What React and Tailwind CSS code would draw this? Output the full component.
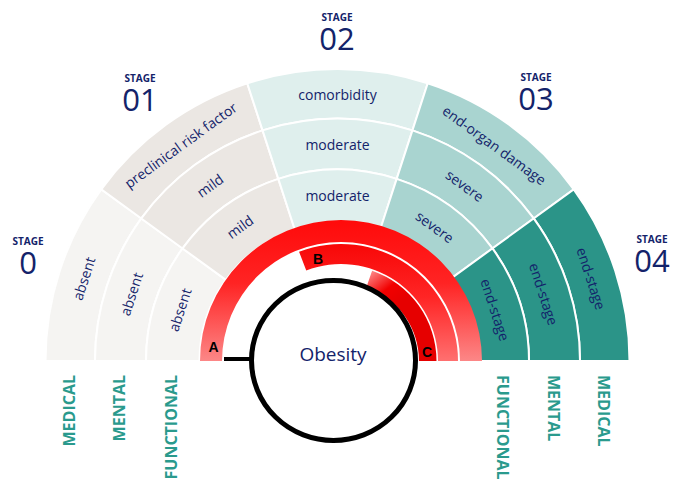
const CX = 337.5;
const CY = 361;
const RX = 341;
const NAVY = "#13236a";
const TEAL = "#2a9a8d";

const stages = [
  { fill: "#f5f4f2", labels: ["absent", "absent", "absent"] },
  { fill: "#ebe7e3", labels: ["preclinical risk factor", "mild", "mild"] },
  { fill: "#dfefed", labels: ["comorbidity", "moderate", "moderate"] },
  { fill: "#a9d4d0", labels: ["end-organ damage", "severe", "severe"] },
  { fill: "#2b9488", labels: ["end-stage", "end-stage", "end-stage"] },
];

const rings = [
  { r0: 242.5, r1: 292, rt: 267 },
  { r0: 191.5, r1: 242.5, rt: 217 },
  { r0: 138, r1: 191.5, rt: 166 },
];

const stageTags = [
  { x: 28, y: 245, n: "0" },
  { x: 140, y: 82, n: "01" },
  { x: 337, y: 21, n: "02" },
  { x: 536, y: 81, n: "03" },
  { x: 652, y: 243, n: "04" },
];

function pt(cx, cy, r, a) {
  const rad = (a * Math.PI) / 180;
  return [cx + r * Math.cos(rad), cy - r * Math.sin(rad)];
}

function sector(cx, cy, r0, r1, a0, a1) {
  const [x1, y1] = pt(cx, cy, r1, a0);
  const [x2, y2] = pt(cx, cy, r1, a1);
  const [x3, y3] = pt(cx, cy, r0, a1);
  const [x4, y4] = pt(cx, cy, r0, a0);
  return `M${x1} ${y1} A${r1} ${r1} 0 0 0 ${x2} ${y2} L${x3} ${y3} A${r0} ${r0} 0 0 1 ${x4} ${y4} Z`;
}

function Wheel() {
  return (
    <svg width="685" height="491" viewBox="0 0 685 491" className="block">
      <defs>
        <linearGradient id="gOuter" gradientUnits="userSpaceOnUse" x1="0" y1="220" x2="0" y2="361">
          <stop offset="0" stopColor="#ff0a0a" />
          <stop offset="0.45" stopColor="#ff2424" />
          <stop offset="1" stopColor="#fc8787" />
        </linearGradient>
        <linearGradient id="gMid" gradientUnits="userSpaceOnUse" x1="0" y1="245" x2="0" y2="361">
          <stop offset="0" stopColor="#f80808" />
          <stop offset="0.45" stopColor="#ff2525" />
          <stop offset="1" stopColor="#ff7070" />
        </linearGradient>
        <linearGradient id="gIn" gradientUnits="userSpaceOnUse" x1="372" y1="266" x2="400" y2="302">
          <stop offset="0" stopColor="#ff9c9c" />
          <stop offset="0.6" stopColor="#f20000" />
          <stop offset="1" stopColor="#e60000" />
        </linearGradient>
      </defs>

      {stages.map((s, i) => {
        const a1 = 180 - 36 * i;
        const a0 = a1 - 36;
        const mid = a1 - 18;
        return rings.map((rg, j) => {
          const [tx, ty] = pt(CX, CY, rg.rt, mid);
          return (
            <g key={`${i}-${j}`}>
              <path d={sector(CX, CY, rg.r0, rg.r1, a0, a1)} fill={s.fill} stroke="#fff" strokeWidth="2" />
              <text
                x={tx}
                y={ty}
                transform={`rotate(${90 - mid} ${tx} ${ty})`}
                textAnchor="middle"
                dominantBaseline="central"
                fill={NAVY}
                fontFamily="'Open Sans', sans-serif"
                fontSize="14"
                fontWeight="500"
              >
                {s.labels[j]}
              </text>
            </g>
          );
        });
      })}

      <path d={sector(RX, CY, 119, 141, 0, 180)} fill="url(#gOuter)" />
      <path d={sector(RX, CY, 97, 117, 0, 111)} fill="url(#gMid)" />
      <path d={sector(RX, CY, 78, 95.5, 0, 71)} fill="url(#gIn)" />

      <line x1="224" y1="359" x2="253" y2="359" stroke="#000" strokeWidth="4" />
      <ellipse cx="333.5" cy="360.5" rx="82" ry="80" fill="#fff" stroke="#000" strokeWidth="5" />
      <text x="333" y="361" textAnchor="middle" fill={NAVY} fontFamily="'Open Sans', sans-serif" fontSize="19" fontWeight="500">
        Obesity
      </text>

      <g fontFamily="'Liberation Sans', Arial, sans-serif" fontWeight="700" fontSize="14" fill="#000" textAnchor="middle">
        <text x="213.5" y="352">A</text>
        <text x="318" y="264">B</text>
        <text x="427" y="357">C</text>
      </g>

      {stageTags.map((t) => (
        <g key={t.n} fill={NAVY} fontFamily="'Open Sans', sans-serif" textAnchor="middle">
          <text x={t.x} y={t.y} fontSize="10" fontWeight="700">
            STAGE
          </text>
          <text x={t.x} y={t.y + 29} fontSize="31" fontWeight="500">
            {t.n}
          </text>
        </g>
      ))}

      <g fill={TEAL} fontFamily="'Open Sans', sans-serif" fontWeight="700" fontSize="16">
        {[
          [69, "MEDICAL"],
          [119, "MENTAL"],
          [171, "FUNCTIONAL"],
        ].map(([x, w]) => (
          <text key={w} x={x} y="375" transform={`rotate(-90 ${x} 375)`} textAnchor="end" dominantBaseline="central">
            {w}
          </text>
        ))}
        {[
          [503, "FUNCTIONAL"],
          [554, "MENTAL"],
          [604, "MEDICAL"],
        ].map(([x, w]) => (
          <text key={w} x={x} y="375" transform={`rotate(90 ${x} 375)`} textAnchor="start" dominantBaseline="central">
            {w}
          </text>
        ))}
      </g>
    </svg>
  );
}

export default function App() {
  return (
    <div className="flex w-[685px] h-[491px] bg-white overflow-hidden">
      <Wheel />
    </div>
  );
}
